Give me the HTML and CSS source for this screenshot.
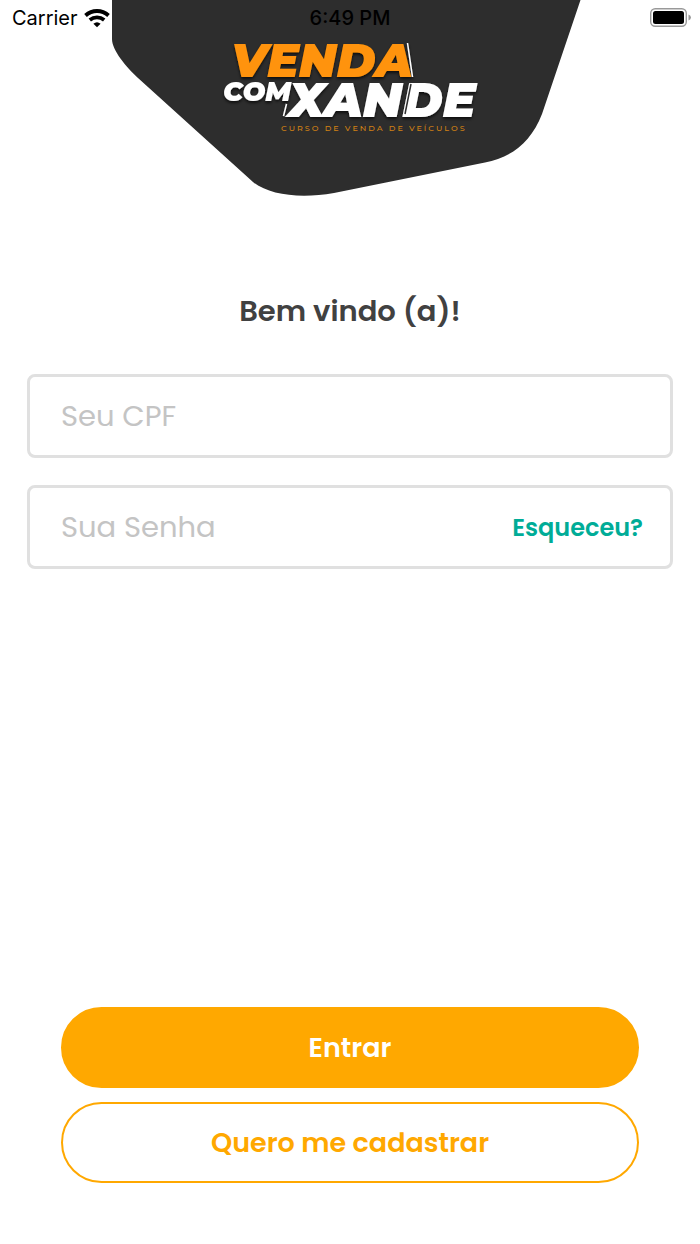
FILE: index.html
```
<!DOCTYPE html>
<html lang="pt-BR">
<head>
<meta charset="utf-8">
<meta name="viewport" content="width=device-width, initial-scale=1">
<title>Venda com Xande</title>
<link rel="stylesheet" href="styles.css">
</head>
<body>
<div class="screen">
  <div class="status-bar">
    <div class="carrier">
      <span>Carrier</span>
      <svg class="wifi" viewBox="0 0 26 19" aria-hidden="true">
        <path d="M1.5 6.500C8.200 .5 17.800 .5 24.500 6.500" fill="none" stroke="#000" stroke-width="3.900"/>
        <path d="M5.800 11C10 7.500 16 7.500 20.200 11" fill="none" stroke="#000" stroke-width="3.700"/>
        <path d="M9.400 14.700Q13 11.700 16.600 14.700L13 18.200Z"/>
      </svg>
    </div>
    <time class="clock">6:49 PM</time>
    <svg class="battery" viewBox="0 0 42 20" aria-hidden="true">
      <rect x=".7" y=".7" width="35.600" height="17.600" rx="4.500" fill="#fff" stroke="#999" stroke-width="1.400"/>
      <rect x="3" y="3" width="31" height="13" rx="2.500"/>
      <path d="M38.500 6.500Q41 7.500 41 9.500T38.500 12.500Z" fill="#999"/>
    </svg>
  </div>

  <header class="hero">
    <svg class="hero-art" viewBox="0 0 700 197" role="img" aria-label="Venda com Xande, curso de venda de veículos">
      <defs>
        <filter id="shade" x="-10%" y="-10%" width="120%" height="130%">
          <feDropShadow dx="0" dy="2" stdDeviation="1.500" flood-color="#000" flood-opacity="0.7"/>
        </filter>
      </defs>
      <path fill="#2d2d2d" d="M112 0H580.500L542 114C531 143 510 158 485 162.500L334 193C300 199 269 195 253 182L138 78C126 67 112 50 112 39Z"/>
      <g filter="url(#shade)">
        <text class="logo-top" x="231" y="77">VENDA</text>
        <text class="logo-small" x="223" y="101">COM</text>
        <text class="logo-main" x="288" y="117">XANDE</text>
        <path class="logo-line" d="M407.500 43L412.500 77M286.500 104L283.500 116"/>
        <path class="logo-cut" d="M411 84L405 114"/>
      </g>
      <text class="logo-tag" x="281" y="131">CURSO DE VENDA DE VEÍCULOS</text>
    </svg>
  </header>

  <main class="content">
    <h1 class="title">Bem vindo (a)!</h1>
    <form class="form">
      <div class="field">
        <input class="field-input" type="text" inputmode="numeric" placeholder="Seu CPF" aria-label="Seu CPF">
      </div>
      <div class="field">
        <input class="field-input" type="password" placeholder="Sua Senha" aria-label="Sua Senha">
        <a class="forgot" href="#">Esqueceu?</a>
      </div>
      <div class="actions">
        <button class="button button-primary" type="submit">Entrar</button>
        <button class="button button-outline" type="button">Quero me cadastrar</button>
      </div>
    </form>
  </main>
</div>
</body>
</html>
```
FILE: styles.css
```
* {
  box-sizing: border-box;
}

body {
  margin: 0;
  background: #fff;
  color: #414141;
  font-family: Poppins, Inter, "Liberation Sans", sans-serif;
}

.screen {
  position: relative;
  display: flex;
  flex-direction: column;
  min-height: 100vh;
}

.status-bar {
  position: absolute;
  top: 0;
  left: 0;
  right: 0;
  display: grid;
  grid-template-columns: 1fr auto 1fr;
  align-items: center;
  height: 36px;
  padding: 0 8px;
  color: #000;
  font-family: Inter, sans-serif;
  font-size: 20px;
}

.carrier {
  display: flex;
  align-items: center;
  gap: 6px;
  padding-left: 4px;
}

.wifi {
  width: 26px;
  height: 19px;
}

.clock {
  font-weight: 500;
}

.battery {
  width: 42px;
  height: 20px;
  justify-self: end;
}

.hero-art {
  display: block;
  width: 100%;
}

.logo-top,
.logo-main,
.logo-small {
  fill: #fff;
  font-family: Montserrat, Inter, sans-serif;
  font-style: italic;
  font-weight: 900;
}

.logo-top {
  fill: #ff930a;
  font-size: 47px;
}

.logo-main {
  font-size: 49px;
}

.logo-small {
  font-size: 27px;
}

.logo-line {
  fill: none;
  stroke: #fff;
  stroke-width: 1.5;
}

.logo-cut {
  fill: none;
  stroke: #2d2d2d;
  stroke-width: 1.5;
}

.logo-tag {
  fill: #d08014;
  font-family: Montserrat, Lato, sans-serif;
  font-size: 8px;
  font-weight: 500;
  letter-spacing: 2px;
}

.content {
  display: flex;
  flex: 1;
  flex-direction: column;
  padding: 92px 27px 61px;
}

.title {
  margin: 0;
  font-size: 29px;
  font-weight: 600;
  line-height: 44px;
  text-align: center;
}

.form {
  display: flex;
  flex: 1;
  flex-direction: column;
  gap: 27px;
  margin-top: 41px;
}

.field {
  display: flex;
  align-items: center;
  height: 84px;
  padding: 0 27px 0 31px;
  border: 3px solid #e0e0e0;
  border-radius: 8px;
}

.field-input {
  flex: 1;
  min-width: 0;
  padding: 0;
  border: 0;
  outline: 0;
  background: transparent;
  color: #414141;
  font: inherit;
  font-size: 29px;
}

.field-input::placeholder {
  color: #c4c4c4;
  opacity: 1;
}

.forgot {
  color: #00ac97;
  font-size: 24px;
  font-weight: 600;
  text-decoration: none;
}

.actions {
  display: flex;
  flex-direction: column;
  gap: 14px;
  margin-top: auto;
  padding: 0 34px;
}

.button {
  height: 81px;
  border: 2px solid #ffa800;
  border-radius: 41px;
  font: inherit;
  font-size: 27px;
  font-weight: 600;
}

.button-primary {
  background: #ffa800;
  color: #fff;
}

.button-outline {
  background: #fff;
  color: #ffa800;
}
```
